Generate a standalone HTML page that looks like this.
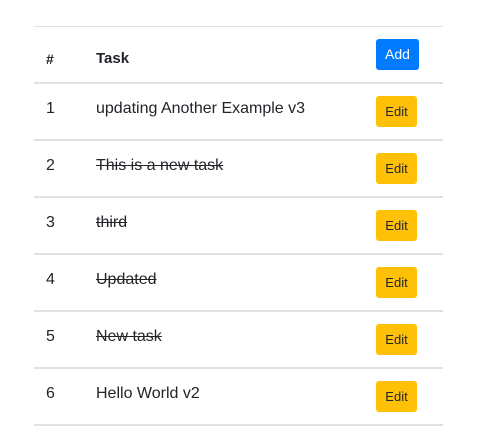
<!DOCTYPE html>
<html><head><style>
body{margin:0;width:478px;height:429px;background:#fff;font-family:"Liberation Sans",sans-serif;color:#212529;position:relative;overflow:hidden}
.l{position:absolute;left:34px;width:409px;background:#dee2e6}
.t{position:absolute;font-size:16px;line-height:20px;white-space:nowrap}
.b{position:absolute;left:376px;width:41px;height:31px;border-radius:3px;background:#ffc107;color:#212529;font-size:13px;line-height:31px;text-align:center}
s{text-decoration:line-through}
</style></head><body>
<div class="l" style="top:26px;height:1px"></div>
<div class="t" style="left:46px;top:49px;font-weight:bold;font-size:14px">#</div>
<div class="t" style="left:96px;top:49px;font-weight:bold;font-size:15px">Task</div>
<div class="b" style="top:39px;width:43px;background:#007bff;color:#fff;font-size:14px">Add</div>
<div class="l" style="top:82px;height:2px"></div>

<div class="t" style="left:46px;top:99px">1</div><div class="t" style="left:96px;top:99px">updating Another Example v3</div><div class="b" style="top:96px">Edit</div>
<div class="l" style="top:139px;height:2px"></div>
<div class="t" style="left:46px;top:156px">2</div><div class="t" style="left:96px;top:156px"><s>This is a new task</s></div><div class="b" style="top:153px">Edit</div>
<div class="l" style="top:196px;height:2px"></div>
<div class="t" style="left:46px;top:213px">3</div><div class="t" style="left:96px;top:213px"><s>third</s></div><div class="b" style="top:210px">Edit</div>
<div class="l" style="top:253px;height:2px"></div>
<div class="t" style="left:46px;top:270px">4</div><div class="t" style="left:96px;top:270px"><s>Updated</s></div><div class="b" style="top:267px">Edit</div>
<div class="l" style="top:310px;height:2px"></div>
<div class="t" style="left:46px;top:327px">5</div><div class="t" style="left:96px;top:327px"><s>New task</s></div><div class="b" style="top:324px">Edit</div>
<div class="l" style="top:367px;height:2px"></div>
<div class="t" style="left:46px;top:384px">6</div><div class="t" style="left:96px;top:384px">Hello World v2</div><div class="b" style="top:381px">Edit</div>
<div class="l" style="top:424px;height:2px"></div>
</body></html>
